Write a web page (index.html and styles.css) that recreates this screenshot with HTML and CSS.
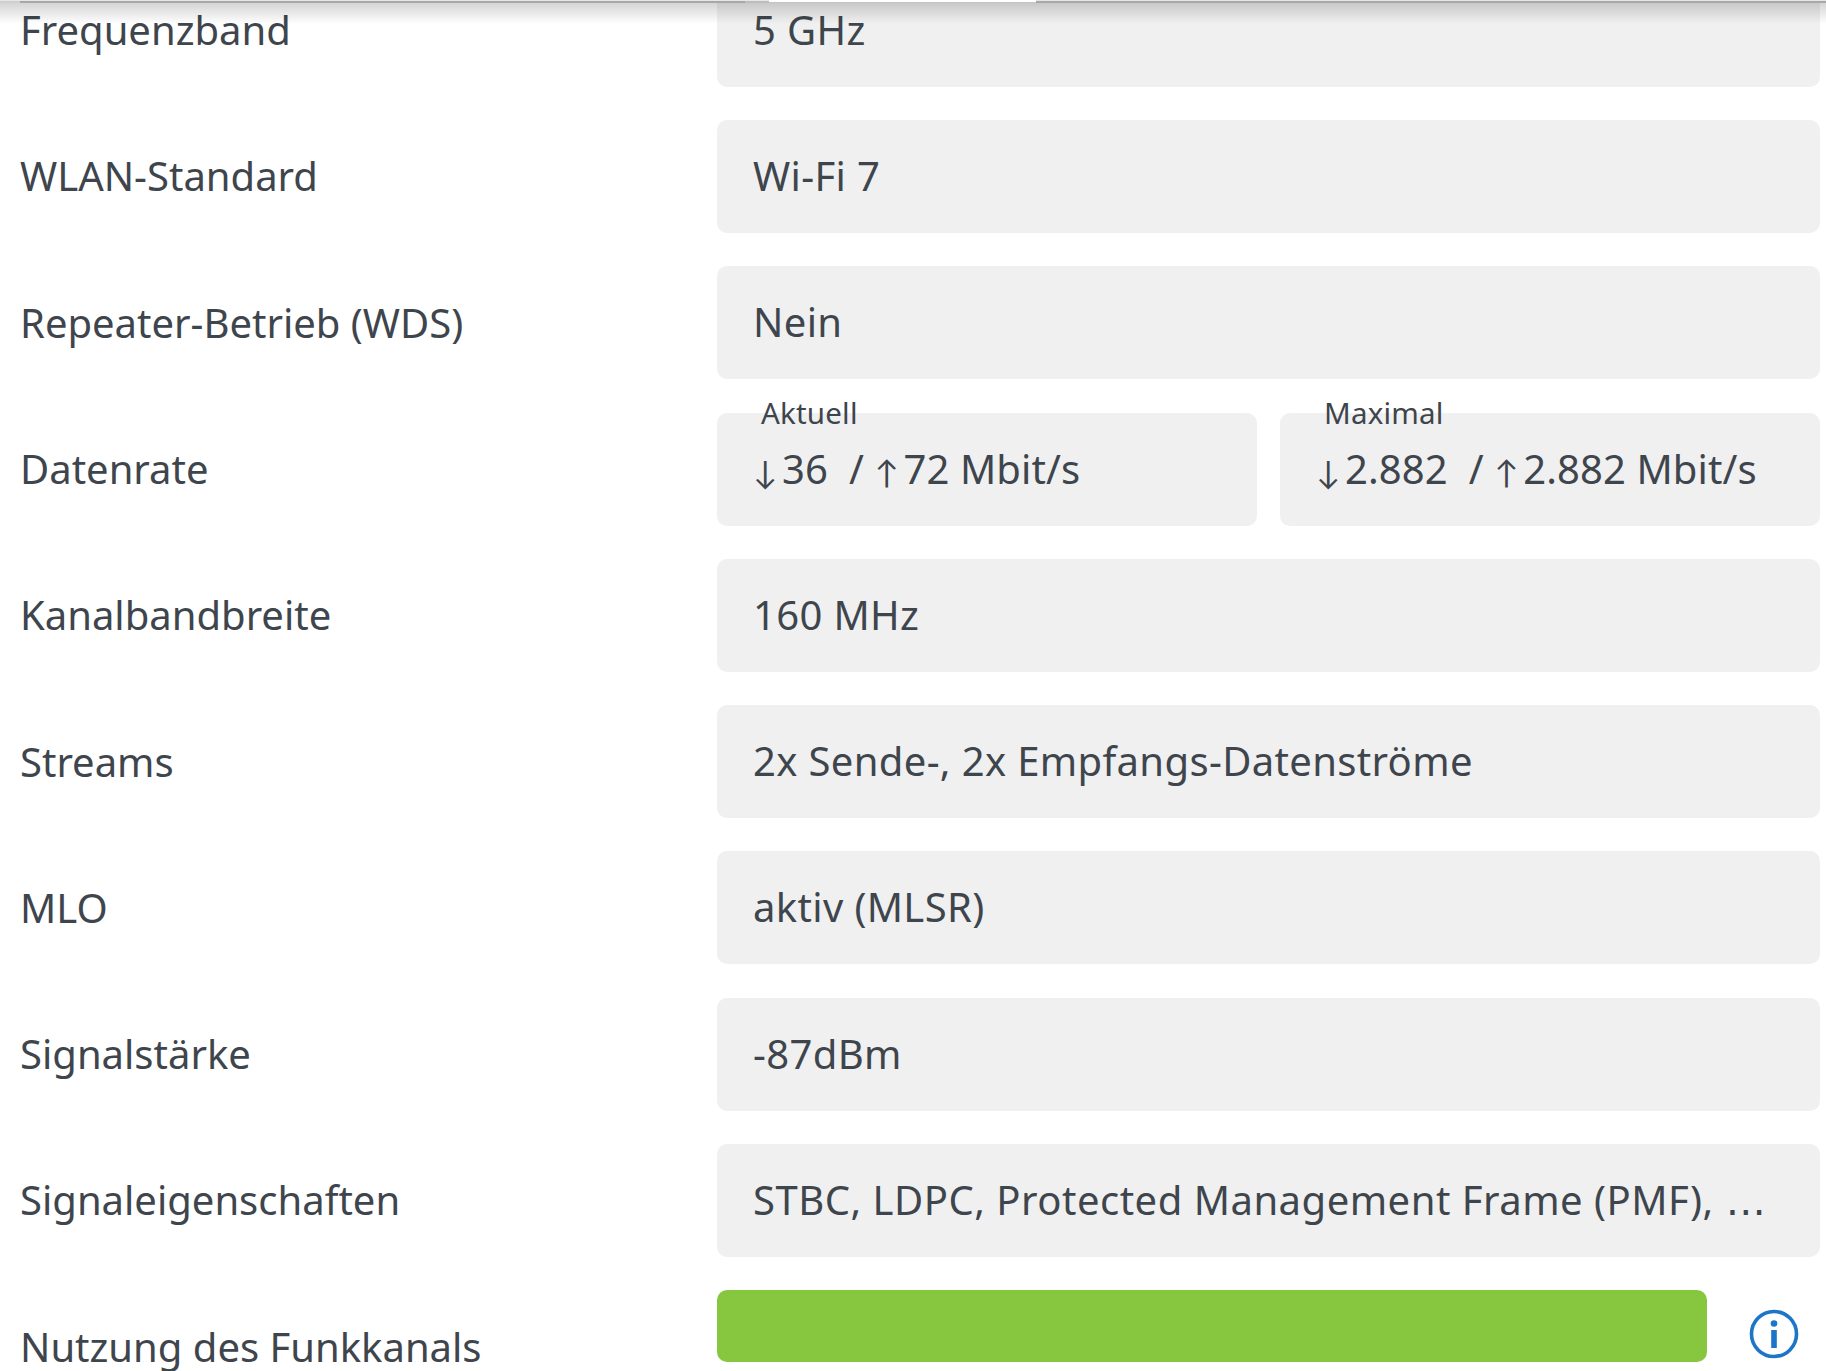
FILE: index.html
```html
<!DOCTYPE html>
<html lang="de">
<head>
<meta charset="utf-8">
<title>WLAN-Details</title>
<link rel="stylesheet" href="styles.css">
</head>
<body>
<div class="topshade"><div class="line line-a"></div><div class="line line-b"></div><div class="line line-c"></div></div>
<main class="list">
  <div class="row"><div class="label">Frequenzband</div><div class="value">5 GHz</div></div>
  <div class="row"><div class="label">WLAN-Standard</div><div class="value">Wi-Fi 7</div></div>
  <div class="row"><div class="label">Repeater-Betrieb (WDS)</div><div class="value">Nein</div></div>
  <div class="row"><div class="label">Datenrate</div>
    <div class="pair">
      <div class="value"><span class="legend">Aktuell</span><span class="arrow">↓</span>36&nbsp; / <span class="arrow">↑</span>72 Mbit/s</div>
      <div class="value"><span class="legend">Maximal</span><span class="arrow">↓</span>2.882&nbsp; / <span class="arrow">↑</span>2.882 Mbit/s</div>
    </div>
  </div>
  <div class="row"><div class="label">Kanalbandbreite</div><div class="value">160 MHz</div></div>
  <div class="row"><div class="label">Streams</div><div class="value">2x Sende-, 2x Empfangs-Datenströme</div></div>
  <div class="row"><div class="label">MLO</div><div class="value">aktiv (MLSR)</div></div>
  <div class="row"><div class="label">Signalstärke</div><div class="value">-87dBm</div></div>
  <div class="row"><div class="label">Signaleigenschaften</div><div class="value value-long">STBC, LDPC, Protected Management Frame (PMF), <span class="dots">…</span></div></div>
  <div class="row row-bar"><div class="label">Nutzung des Funkkanals</div>
    <div class="usage">
      <div class="bar"></div>
      <svg class="info" viewBox="0 0 50 50" width="50" height="50" aria-label="Info"><circle cx="25" cy="25" r="22.5" fill="none" stroke="#1c75c8" stroke-width="3.6"/><circle cx="25" cy="14.5" r="3.3" fill="#1c75c8"/><rect x="22.2" y="21" width="5.6" height="18" fill="#1c75c8"/></svg>
    </div>
  </div>
</main>
</body>
</html>
```
FILE: styles.css
```css
html, body { margin: 0; padding: 0; background: #fff; }
body { width: 1826px; height: 1371px; overflow: hidden; position: relative; font-family: "Noto Sans", "Lato", sans-serif; color: #3e454c; }
.list { margin-top: -26.4px; padding: 0 6px 0 20px; display: flex; flex-direction: column; gap: 33.3px; font-size: 40px; }
.row { display: grid; grid-template-columns: 697px 1fr; align-items: center; }
.label { line-height: 50px; }
.value { height: 113px; box-sizing: border-box; background: #f0f0f0; border-radius: 10px; padding-left: 36px; line-height: 112px; position: relative; white-space: nowrap; letter-spacing: 0.35px; }
.value-long { letter-spacing: 0.5px; }
.pair { display: grid; grid-template-columns: 1fr 1fr; gap: 23px; }
.pair .value { letter-spacing: 0.1px; }
.legend { position: absolute; left: 36px; top: -18px; font-size: 29.5px; line-height: 35px; padding: 0 8px; background: #fff; height: 18px; letter-spacing: 0.2px; }
.arrow { font-family: "Lato", sans-serif; letter-spacing: 0; font-size: 32px; display: inline-block; width: 29px; }
.dots { font-family: "DejaVu Sans", sans-serif; margin-left: 1px; }
.row-bar { align-items: start; }
.row-bar .label { margin-top: 32px; }
.usage { display: flex; align-items: flex-start; }
.bar { width: 990px; height: 72px; background: #87c73f; border-radius: 10px; }
.info { margin: 19px 0 0 42px; }
.topshade { position: absolute; left: 0; right: 0; top: 0; height: 24px; background: linear-gradient(rgba(0,0,0,.19), rgba(0,0,0,0)); z-index: 2; display: flex; align-items: flex-start; }
.line { height: 3px; border-top: 1px solid #e6e6e6; box-sizing: border-box; }
.line-a { width: 769px; background: linear-gradient(90deg, #cfcfcf 20px, #a8a8a8 20px, #a8a8a8 745px, #bdbdbd 745px); }
.line-b { width: 267px; height: 3px; background: #fff; border: 0; border-bottom: 1px solid #c4c4c4; }
.line-c { flex: 1; background: #a8a8a8; }
```
